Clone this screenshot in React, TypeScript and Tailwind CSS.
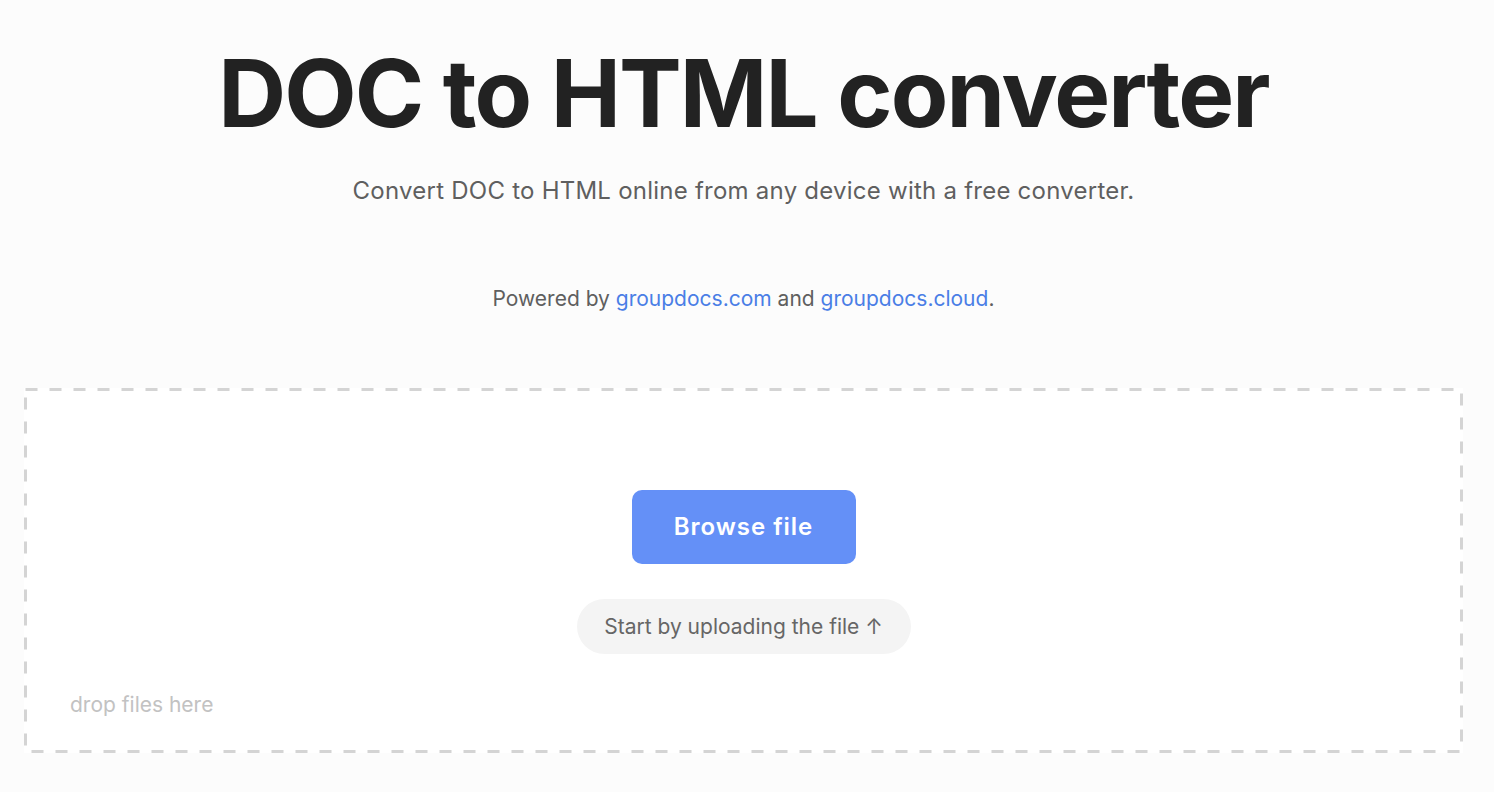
import React from "react";

const App = () => {
  return (
    <div className="min-h-screen bg-[#fcfcfc] font-['Inter',sans-serif] text-[#222222]">
      <div className="w-[1487px]">
        <div className="flex flex-col items-center pt-[38px]">
          <h1 className="text-[94px] font-bold leading-[110px] tracking-[-0.02em]">
            DOC to HTML converter
          </h1>
          <p className="mt-[28px] text-[24px] leading-[30px] tracking-[0.01em] text-[#5f5f5f]">
            Convert DOC to HTML online from any device with a free converter.
          </p>
          <p className="mt-[80px] text-[21px] leading-[26px] text-[#5f5f5f]">
            Powered by{" "}
            <a href="#" className="text-[#4a7ee6]">
              groupdocs.com
            </a>{" "}
            and{" "}
            <a href="#" className="text-[#4a7ee6]">
              groupdocs.cloud
            </a>
            .
          </p>
        </div>

        {/* drop zone */}
        <div className="relative mx-[24px] mt-[76px] flex h-[365px] flex-col bg-white px-[46px]">
          <svg className="pointer-events-none absolute inset-0 h-full w-full" preserveAspectRatio="none">
            <rect
              x="1.5"
              y="1.5"
              width="calc(100% - 3px)"
              height="calc(100% - 3px)"
              fill="none"
              stroke="#d4d4d4"
              strokeWidth="3"
              strokeDasharray="12 12"
            />
          </svg>
          <div className="flex flex-1 flex-col items-center justify-end">
            <button className="flex h-[74px] w-[224px] items-center justify-center rounded-[10px] bg-[#6490f7] text-[24px] font-semibold tracking-[0.04em] text-white">
              Browse file
            </button>
            <div className="mt-[35px] flex h-[55px] w-[334px] items-center justify-center rounded-full bg-[#f4f4f4] text-[21px] text-[#666666]">
              Start by uploading the file ↑
            </div>
          </div>
          <div className="pb-[35px] pt-[38px] text-[21px] leading-[26px] text-[#c2c2c2]">
            drop files here
          </div>
        </div>
      </div>
    </div>
  );
};

export default App;
